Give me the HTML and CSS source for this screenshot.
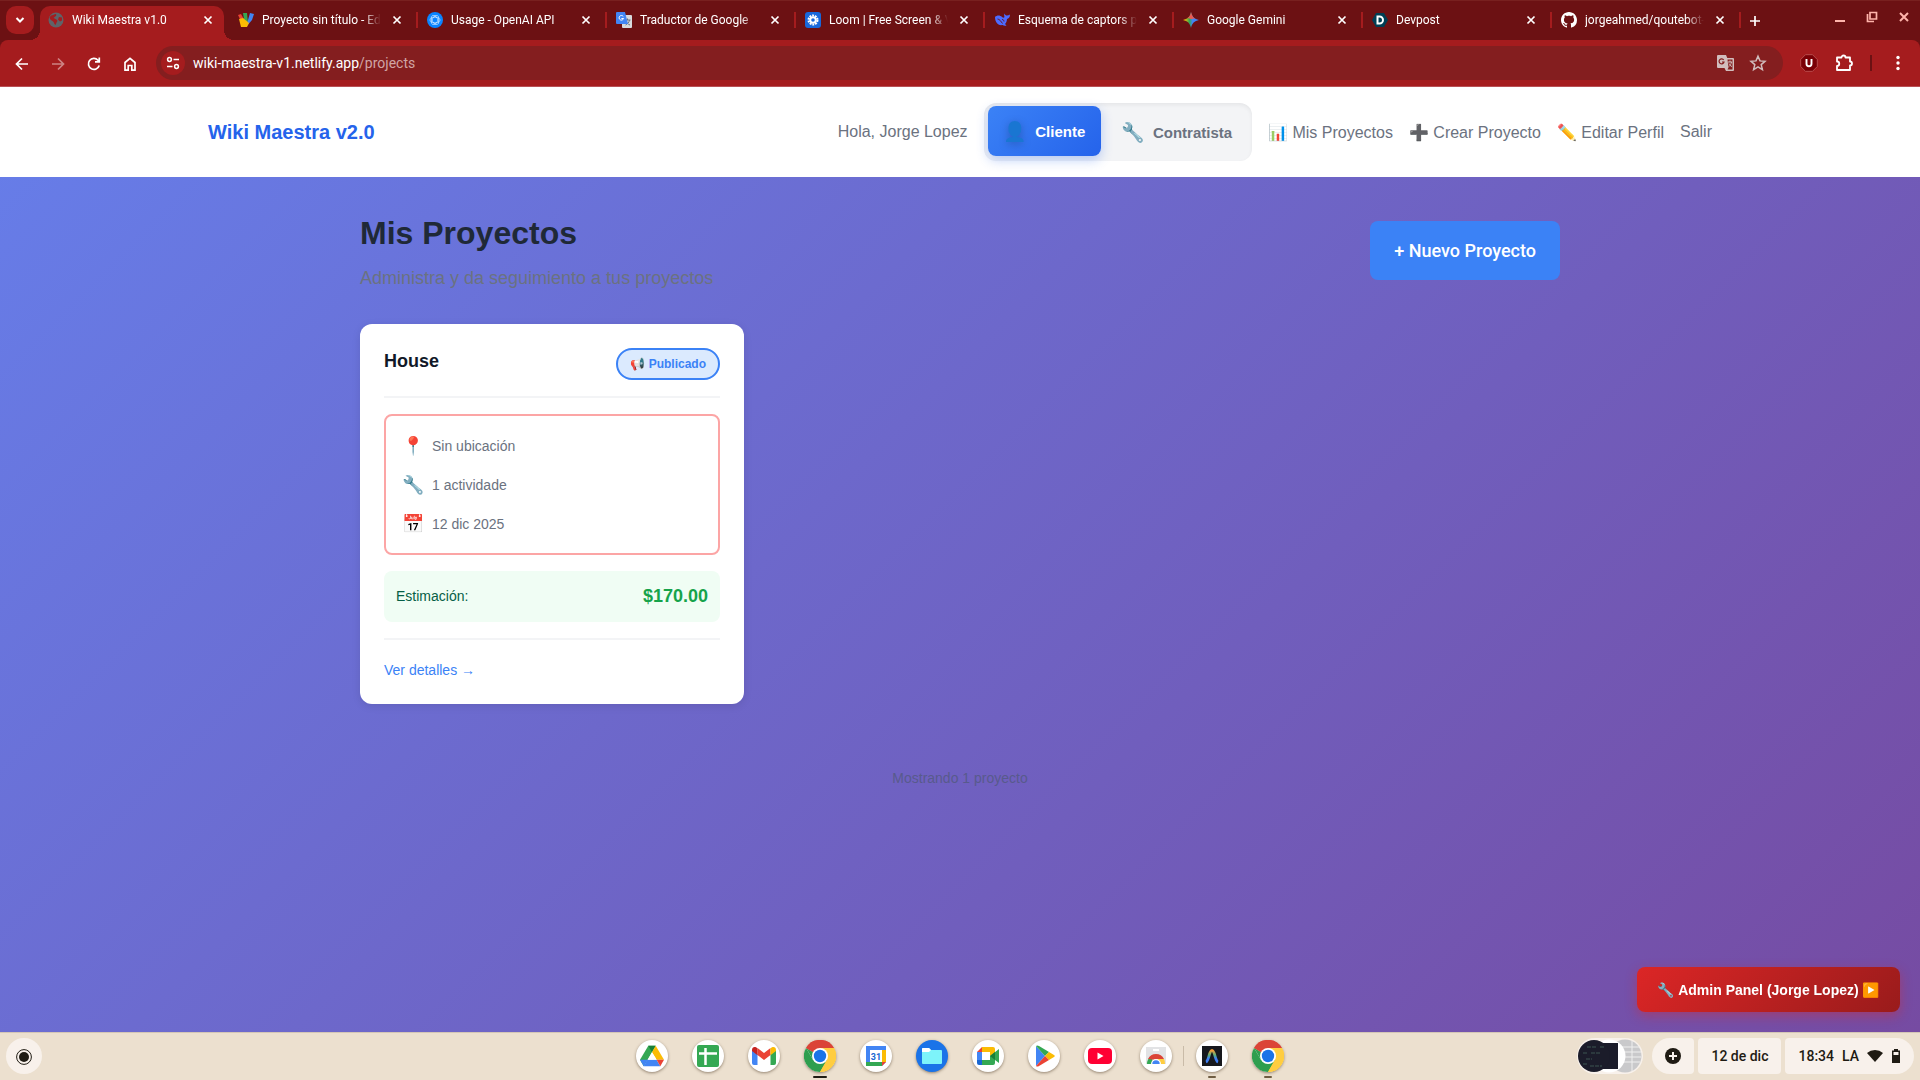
FILE: index.html
```html
<!DOCTYPE html>
<html lang="es">
<head>
    <meta charset="UTF-8">
    <meta name="viewport" content="width=device-width, initial-scale=1.0">
    <title>Wiki Maestra v1.0</title>
    <link rel="stylesheet" href="styles.css">
</head>
<body>
    <!-- Iconos compartidos -->
    <svg class="defs" aria-hidden="true">
        <symbol id="x" viewBox="0 0 10 10"><path d="M1.5 1.5l7 7M8.5 1.5l-7 7" fill="none" stroke="currentColor" stroke-width="1.7"/></symbol>
        <symbol id="chrome" viewBox="0 0 32 32">
            <path d="M16 16L2.1 8A16 16 0 0 1 29.9 8z" fill="#db4437"/>
            <path d="M16 16L29.9 8A16 16 0 0 1 16 32z" fill="#ffcd40"/>
            <path d="M2.1 8A16 16 0 0 0 16 32l6.9-12L16 16 9.1 20z" fill="#2e9e4f"/>
            <path d="M2.1 8L9.1 20 16 16z" fill="#2e9e4f"/>
            <path d="M16 8h13.9A16 16 0 0 1 16 32l6.9-12z" fill="#ffcd40"/>
            <path d="M2.1 8A16 16 0 0 1 29.9 8H16a8 8 0 0 0-6.9 4z" fill="#db4437"/>
            <circle cx="16" cy="16" r="8" fill="#fff"/><circle cx="16" cy="16" r="6.2" fill="#1a73e8"/>
        </symbol>
    </svg>

    <header class="browser">
        <div class="tabstrip">
            <button class="tab-search" aria-label="Buscar pestañas"><svg viewBox="0 0 12 12" width="12" height="12"><path d="M2.5 4L6 7.500 9.500 4" fill="none" stroke="#fff" stroke-width="2"/></svg></button>
            <div class="tabs">
                <div class="tab active">
                    <svg class="favicon" viewBox="0 0 16 16"><circle cx="8" cy="8" r="7.500" fill="#5f6368"/><path d="M3 3.500c2 0 3-1.500 5-1.500 1 2-1 2.500-2.500 4C7 7 9 7 9.500 9c-1 1-1 2-2 4-2-1-1-3-3-4S2 7 1.500 5.500zM11 5l3 .5v3l-2 1-2-2z" fill="#a51c1e"/></svg>
                    <span class="tab-title">Wiki Maestra v1.0</span>
                    <button class="tab-close" aria-label="Cerrar"><svg><use href="#x"/></svg></button>
                </div>
                <div class="tab">
                    <svg class="favicon" viewBox="0 0 16 16"><path d="M0 3l3-1 5 9-2 4z" fill="#ea4335"/><path d="M5 1l4 0 1 10-3 2z" fill="#34a853"/><path d="M12 1l4 1-2 6-6 7z" fill="#4285f4"/><path d="M1 7l4-1 6 5-2 4H3z" fill="#fbbc04"/></svg>
                    <span class="tab-title">Proyecto sin título - Editor</span>
                    <button class="tab-close" aria-label="Cerrar"><svg><use href="#x"/></svg></button>
                </div>
                <div class="tab">
                    <svg class="favicon" viewBox="0 0 16 16"><circle cx="8" cy="8" r="8" fill="#0a84ff"/><g fill="none" stroke="#cfe6ff" stroke-width=".7"><ellipse cx="8" cy="8" rx="5" ry="2.800"/><ellipse cx="8" cy="8" rx="5" ry="2.800" transform="rotate(60 8 8)"/><ellipse cx="8" cy="8" rx="5" ry="2.800" transform="rotate(120 8 8)"/></g></svg>
                    <span class="tab-title">Usage - OpenAI API</span>
                    <button class="tab-close" aria-label="Cerrar"><svg><use href="#x"/></svg></button>
                </div>
                <div class="tab">
                    <svg class="favicon" viewBox="0 0 16 16"><rect x="6" y="3" width="10" height="13" rx="1" fill="#d8dadd"/><path d="M8.500 8h6M11.500 6.500V8M13.500 8c-.5 2.500-2 4-4 5M10 9.500c.8 1.500 2 2.700 4 3.500" stroke="#6b7480" fill="none"/><path d="M1 0h8l3 12H1a1 1 0 0 1-1-1V1a1 1 0 0 1 1-1z" fill="#4285f4"/><path d="M7.300 4.500A2.300 2.300 0 1 0 7.600 6.500H5.400" stroke="#fff" fill="none"/></svg>
                    <span class="tab-title">Traductor de Google</span>
                    <button class="tab-close" aria-label="Cerrar"><svg><use href="#x"/></svg></button>
                </div>
                <div class="tab">
                    <svg class="favicon" viewBox="0 0 16 16"><rect width="16" height="16" rx="3" fill="#1868db"/><circle cx="8" cy="8" r="4.500" fill="none" stroke="#fff" stroke-width="2" stroke-dasharray="1.900 .93"/><circle cx="8" cy="8" r="2.800" fill="none" stroke="#fff" stroke-width="2"/></svg>
                    <span class="tab-title">Loom | Free Screen &amp; Video Recording</span>
                    <button class="tab-close" aria-label="Cerrar"><svg><use href="#x"/></svg></button>
                </div>
                <div class="tab">
                    <svg class="favicon" viewBox="0 0 16 16"><path d="M1 5c2-2 5-2 7 0 1 1 2 1 2.500 0C10 3.500 10 2.500 10.500 1.500c.5 1.500 1.500 2 2.500 2 1 0 2-.5 3-1 0 3-1.500 4-3 4.500-.3 3-1 4-2 5l1.500 1.500c-2 .5-3 0-4-.5C4 14 1 10 1 5z" fill="#4d6bfe"/><path d="M3.500 7c2 0 3.500 2.500 5 4.500M8 7.500c1.500 0 2 1 2 2" fill="none" stroke="#6c1113" stroke-width=".9"/></svg>
                    <span class="tab-title">Esquema de captors para proyecto</span>
                    <button class="tab-close" aria-label="Cerrar"><svg><use href="#x"/></svg></button>
                </div>
                <div class="tab">
                    <svg class="favicon" viewBox="0 0 16 16"><defs><linearGradient id="gem"><stop offset=".1" stop-color="#fbbc04"/><stop offset=".4" stop-color="#34a853"/><stop offset=".6" stop-color="#4285f4"/></linearGradient></defs><path d="M8 0c.8 4.500 3.500 7.200 8 8-4.500.8-7.200 3.500-8 8-.8-4.500-3.500-7.200-8-8 4.500-.8 7.200-3.500 8-8z" fill="url(#gem)"/><path d="M8 0c.8 4 2.500 5.500 4 6.500L8 7 4.500 6C6.500 5 7.500 3 8 0z" fill="#ea5a50"/></svg>
                    <span class="tab-title">Google Gemini</span>
                    <button class="tab-close" aria-label="Cerrar"><svg><use href="#x"/></svg></button>
                </div>
                <div class="tab">
                    <svg class="favicon" viewBox="0 0 16 16"><path d="M4 1h8l4 7-4 7H4L0 8z" fill="#003e54"/><path d="M5.500 4.500h2a3.500 3.500 0 0 1 0 7h-2z" fill="none" stroke="#fff" stroke-width="2"/></svg>
                    <span class="tab-title">Devpost</span>
                    <button class="tab-close" aria-label="Cerrar"><svg><use href="#x"/></svg></button>
                </div>
                <div class="tab">
                    <svg class="favicon" viewBox="0 0 16 16"><path fill="#fff" d="M8 0C3.580 0 0 3.580 0 8c0 3.540 2.290 6.530 5.470 7.590.4.070.55-.17.55-.38 0-.19-.01-.82-.01-1.490-2.010.37-2.530-.49-2.690-.94-.09-.23-.48-.94-.82-1.130-.28-.15-.68-.52-.01-.53.63-.01 1.080.58 1.230.82.72 1.210 1.870.87 2.330.66.07-.52.28-.87.51-1.070-1.780-.2-3.640-.89-3.640-3.950 0-.87.31-1.590.82-2.150-.08-.2-.36-1.020.08-2.120 0 0 .67-.21 2.200.82.64-.18 1.320-.27 2-.27s1.360.09 2 .27c1.530-1.040 2.200-.82 2.200-.82.44 1.100.16 1.920.08 2.120.51.56.82 1.270.82 2.150 0 3.070-1.870 3.750-3.650 3.950.29.25.54.73.54 1.480 0 1.070-.01 1.930-.01 2.200 0 .21.15.46.55.38A8.010 8.010 0 0 0 16 8c0-4.420-3.580-8-8-8z"/></svg>
                    <span class="tab-title">jorgeahmed/qoutebot-app</span>
                    <button class="tab-close" aria-label="Cerrar"><svg><use href="#x"/></svg></button>
                </div>
                <button class="new-tab" aria-label="Nueva pestaña"><svg viewBox="0 0 10 10" width="10" height="10"><path d="M5 0v10M0 5h10" stroke="#fff" stroke-width="1.700"/></svg></button>
            </div>
            <div class="window-buttons">
                <button aria-label="Minimizar"><svg viewBox="0 0 12 12" width="12" height="12"><path d="M1 10h10" stroke="currentColor" stroke-width="2"/></svg></button>
                <button aria-label="Restaurar"><svg viewBox="0 0 12 12" width="12" height="12"><path d="M4 1.500h6.500V8H4zM1.500 3v7.500H8" fill="none" stroke="currentColor" stroke-width="1.700"/></svg></button>
                <button aria-label="Cerrar ventana"><svg viewBox="0 0 12 12" width="12" height="12"><path d="M2 2l8 8M10 2l-8 8" stroke="currentColor" stroke-width="2"/></svg></button>
            </div>
        </div>
        <div class="toolbar">
            <button class="tool" aria-label="Atrás"><svg viewBox="0 0 16 16"><path d="M14 8H3M8 2.500L2.500 8 8 13.500" fill="none" stroke="#fff" stroke-width="1.700"/></svg></button>
            <button class="tool dim" aria-label="Adelante"><svg viewBox="0 0 16 16"><path d="M2 8h11M8 2.500L13.500 8 8 13.500" fill="none" stroke="#fff" stroke-width="1.700"/></svg></button>
            <button class="tool" aria-label="Recargar"><svg viewBox="0 0 16 16"><path d="M13.200 9.500A5.500 5.500 0 1 1 12 4.200l1 1.300M13.300 1.500v4.300H9" fill="none" stroke="#fff" stroke-width="1.700"/></svg></button>
            <button class="tool" aria-label="Inicio"><svg viewBox="0 0 16 16"><path d="M3 14.200V6.500L8 2.300l5 4.200v7.700H9.800V9.500H6.200v4.700z" fill="none" stroke="#fff" stroke-width="1.700"/></svg></button>
            <div class="omnibox">
                <span class="site-info"><svg viewBox="0 0 14 14" width="14" height="14"><g fill="none" stroke="#fff" stroke-width="1.500"><circle cx="3.500" cy="3.500" r="1.900"/><path d="M7.500 3.500H13M1 10.500h5.500"/><circle cx="10.500" cy="10.500" r="1.900"/></g></svg></span>
                <a class="url" href="#">wiki-maestra-v1.netlify.app<span>/projects</span></a>
                <svg class="omni-icon" viewBox="0 0 18 18"><path d="M1 1h8l1.300 3H16a1 1 0 0 1 1 1v11a1 1 0 0 1-1 1H9l-1.500-3H1a1 1 0 0 1-1-1V2a1 1 0 0 1 1-1z" fill="#d1bdbd"/><path d="M10.500 5.500H15.500v10h-5l1-2z" fill="#841e1f"/><path d="M6.700 6A2.500 2.500 0 1 0 7 8H5" fill="none" stroke="#841e1f" stroke-width="1.200"/><path d="M11 8h4M13 6.500V8M14.500 8c-.4 2-1.300 3.500-2.500 4.500M12 9.500c.5 1.500 1.500 2.500 3 3" fill="none" stroke="#d1bdbd"/></svg>
                <svg class="omni-icon" viewBox="0 0 18 18"><path d="M9 2.200l2 4.700 5 .4-3.800 3.300 1.200 5L9 12.900l-4.400 2.700 1.200-5L2 7.300l5-.4z" fill="none" stroke="#d1bdbd" stroke-width="1.500"/></svg>
            </div>
            <div class="extensions">
                <svg viewBox="0 0 18 18" width="18" height="18"><path d="M5.500.7h7l4.800 4.800v7l-4.800 4.800h-7L.7 12.500v-7z" fill="#7a0006" stroke="#c05a5a" stroke-width=".8"/><path d="M6.500 5v4.800a2.500 2.500 0 0 0 5 0V5" fill="none" stroke="#fff" stroke-width="1.900"/></svg>
                <svg viewBox="0 0 18 18" width="18" height="18"><path d="M2 3.500h4.500a2 2 0 0 1 4 0H15v4a2 2 0 0 1 0 4v4.500H2v-4a2 2 0 0 0 0-4.500z" fill="none" stroke="#fff" stroke-width="1.800" stroke-linejoin="round"/></svg>
                <i></i>
                <svg viewBox="0 0 18 18" width="18" height="18"><g fill="#fff"><circle cx="9" cy="3.500" r="1.700"/><circle cx="9" cy="9" r="1.700"/><circle cx="9" cy="14.500" r="1.700"/></g></svg>
            </div>
        </div>
    </header>

    <div class="app">
        <nav class="navbar">
            <div class="nav-container">
                <a class="logo" href="#">Wiki Maestra v2.0</a>
                <div class="nav-menu">
                    <span>Hola, Jorge Lopez</span>
                    <div class="role-toggle">
                        <button class="role active"><span class="role-icon">👤</span>Cliente</button>
                        <button class="role"><span class="role-icon">🔧</span>Contratista</button>
                    </div>
                    <a href="#">📊 Mis Proyectos</a>
                    <a href="#">➕ Crear Proyecto</a>
                    <a href="#">✏️ Editar Perfil</a>
                    <a href="#">Salir</a>
                </div>
            </div>
        </nav>

        <main class="projects">
            <div class="page-header">
                <div>
                    <h1>Mis Proyectos</h1>
                    <p>Administra y da seguimiento a tus proyectos</p>
                </div>
                <button class="new-project">+ Nuevo Proyecto</button>
            </div>

            <div class="project-grid">
                <article class="card">
                    <div class="card-header">
                        <h3>House</h3>
                        <span class="badge">📢 Publicado</span>
                    </div>
                    <div class="card-info">
                        <div class="info-row"><span class="info-icon">📍</span>Sin ubicación</div>
                        <div class="info-row"><span class="info-icon">🔧</span>1 actividade</div>
                        <div class="info-row"><span class="info-icon">📅</span>12 dic 2025</div>
                    </div>
                    <div class="estimate">
                        <span>Estimación:</span>
                        <strong>$170.00</strong>
                    </div>
                    <div class="card-footer">
                        <a href="#">Ver detalles →</a>
                    </div>
                </article>
            </div>

            <p class="summary">Mostrando 1 proyecto</p>
        </main>

        <button class="admin-panel">🔧 Admin Panel (Jorge Lopez) ▶️</button>
    </div>

    <footer class="shelf">
        <div class="shelf-side">
            <button class="launcher" aria-label="Menú de aplicaciones"><svg viewBox="0 0 16 16" width="16" height="16"><circle cx="8" cy="8" r="7.400" fill="none" stroke="#1f1b13"/><circle cx="8" cy="8" r="5" fill="#1f1b13"/></svg></button>
        </div>
        <div class="apps">
            <button class="app-icon" aria-label="Drive"><svg viewBox="0 0 26 24"><path d="M9 1h8l-4 7-9 15-4-7z" fill="#34a853"/><path d="M9 1h8l-4 7z" fill="#188038"/><path d="M17 1l9 15h-8L13 8z" fill="#fbbc04"/><path d="M8 16h10l4 7H4z" fill="#4285f4"/><path d="M0 16h8.500L4 23z" fill="#4285f4"/><path d="M18 16h8l-4 7z" fill="#ea4335"/><path d="M13 8l5 8H8.500z" fill="#fff"/></svg></button>
            <button class="app-icon" aria-label="Hojas de cálculo"><svg viewBox="0 0 24 24"><rect x="1" y="1" width="22" height="22" rx="2" fill="#34a853"/><path d="M9.500 4v17M3 9.500h18" stroke="#fff" stroke-width="2.500"/></svg></button>
            <button class="app-icon" aria-label="Gmail"><svg viewBox="0 0 24 24"><path d="M0 6v13a2 2 0 0 0 2 2h3.500V10z" fill="#4285f4"/><path d="M24 6v13a2 2 0 0 1-2 2h-3.500V10z" fill="#34a853"/><path d="M5.500 4L12 9l6.500-5v7L12 16l-6.500-5z" fill="#ea4335"/><path d="M5.500 4.500v6.800L0 7V6c0-3 3-4 5.500-1.500z" fill="#c5221f"/><path d="M18.500 4.500v6.800L24 7V6c0-3-3-4-5.500-1.500z" fill="#fbbc04"/></svg></button>
            <button class="app-icon full running" aria-label="Chrome"><svg><use href="#chrome"/></svg></button>
            <button class="app-icon" aria-label="Calendario"><svg viewBox="0 0 24 24"><path d="M2 2h20v16l-4 4H2z" fill="#4285f4"/><path d="M18 6h4v12h-4z" fill="#fbbc04"/><path d="M2 18h16v4H2z" fill="#34a853"/><path d="M18 18h4l-4 4z" fill="#ea4335"/><path d="M6 6h12v12H6z" fill="#fff"/><text x="12" y="15.500" text-anchor="middle" class="cal-day">31</text></svg></button>
            <button class="app-icon files" aria-label="Archivos"><svg viewBox="0 0 24 24"><path d="M3 4h6l2 2h10a1 1 0 0 1 1 1v12a1 1 0 0 1-1 1H3a1 1 0 0 1-1-1V5a1 1 0 0 1 1-1z" fill="#7df3fa"/><path d="M3 4h6l2 2-2 2H2V5a1 1 0 0 1 1-1z" fill="#fff"/></svg></button>
            <button class="app-icon" aria-label="Meet"><svg viewBox="0 0 24 24"><path d="M1 8l5-5v5z" fill="#ea4335"/><path d="M6 3h11a2 2 0 0 1 2 2v5l-5 2V8H6z" fill="#fbbc04"/><path d="M1 8h5v8H1z" fill="#4285f4"/><path d="M1 16h5v5H3a2 2 0 0 1-2-2z" fill="#1967d2"/><path d="M6 16h8v-4l9-7v14l-4-3v3a2 2 0 0 1-2 2H6z" fill="#34a853"/><path d="M14 12l5-4v8z" fill="#188038"/></svg></button>
            <button class="app-icon" aria-label="Play Store"><svg viewBox="0 0 24 24"><path d="M4 2v20l9-10z" fill="#4285f4"/><path d="M4 2c1-1 2-.5 3 0l10 6-4 4z" fill="#34a853"/><path d="M17 8l5 3c1 .6 1 1.400 0 2l-5 3-4-4z" fill="#fbbc04"/><path d="M4 22c1 1 2 .5 3 0l10-6-4-4z" fill="#ea4335"/></svg></button>
            <button class="app-icon" aria-label="YouTube"><svg viewBox="0 0 24 24"><rect y="4" width="24" height="16" rx="4" fill="#ff0033"/><path d="M9.500 8.500v7l6-3.500z" fill="#fff"/></svg></button>
            <button class="app-icon" aria-label="Chrome Web Store"><svg viewBox="0 0 24 24"><path d="M2 3h20v17H2z" fill="#e2e3e5"/><path d="M9 5h6v2H9z" fill="#fff"/><path d="M3 20a9 9 0 0 1 4-7.500L10 20z" fill="#34a853"/><path d="M4 15a9 9 0 0 1 16 0l-8 1z" fill="#db4437"/><path d="M12 15h8a9 9 0 0 1 1 5h-6z" fill="#ffcd40"/><path d="M7 20a5 5 0 0 1 10 0z" fill="#fff"/><path d="M8.300 20a3.700 3.700 0 0 1 7.400 0z" fill="#4285f4"/></svg></button>
            <i class="shelf-divider"></i>
            <button class="app-icon running soft" aria-label="Antigravity"><svg viewBox="0 0 24 24"><defs><linearGradient id="arc" x2="0" y2="1"><stop offset="0" stop-color="#f29a38"/><stop offset=".4" stop-color="#5bb07a"/><stop offset=".7" stop-color="#3d7ff5"/></linearGradient></defs><rect x="2" y="2" width="20" height="20" fill="#16181d"/><path d="M6 18C9 17 9 6.500 12 6.500S15 17 18 18" fill="none" stroke="url(#arc)" stroke-width="2.800"/></svg></button>
            <button class="app-icon full running soft" aria-label="Chrome"><svg><use href="#chrome"/></svg></button>
        </div>
        <div class="shelf-side status">
            <svg class="holding" viewBox="0 0 66 36" width="66" height="36"><rect width="66" height="36" rx="18" fill="#f8f1eb"/><circle cx="48" cy="18" r="16.500" fill="#c9c9cb"/><path d="M39 9h24M36 14h28M40 19h24M38 24h25M55 3v30" stroke="#efefef"/><circle cx="32" cy="18" r="16.500" fill="#fff"/><path d="M16 5h25v26H16z" fill="#1b1c2a"/><circle cx="17" cy="18" r="16" fill="#1b1c2a"/><path d="M10 9h10M23 9h5M6 15h5M14 15h9M9 21h6M6 26h4M13 28h12" stroke="#3c5550" stroke-dasharray="4 1"/></svg>
            <button class="pill first" aria-label="Captura"><svg viewBox="0 0 18 18" width="18" height="18"><circle cx="9" cy="9" r="8" fill="#1f1b13"/><path d="M9 5v8M5 9h8" stroke="#f8f1eb" stroke-width="2"/></svg></button>
            <button class="pill">12 de dic</button>
            <button class="pill last"><span>18:34</span><span>LA</span>
                <svg viewBox="0 0 16 16" width="16" height="16"><path d="M0 5a12 12 0 0 1 16 0L8 14z" fill="#1f1b13"/></svg>
                <svg viewBox="0 0 10 16" width="10" height="16"><path d="M3 1h4v1.500h2V15H1V2.500h2z" fill="#1f1b13"/><path d="M2.500 4h5v3h-5z" fill="#f8f1eb"/></svg>
            </button>
        </div>
    </footer>
</body>
</html>
```
FILE: styles.css
```css
* {
    margin: 0;
    padding: 0;
    box-sizing: border-box;
}
body {
    display: flex;
    flex-direction: column;
    min-height: 100vh;
    font-family: "Liberation Sans", Arial, "Noto Color Emoji", sans-serif;
    color: #111827;
}
button {
    border: none;
    background: none;
    font: inherit;
    color: inherit;
    cursor: pointer;
}
a {
    color: inherit;
    text-decoration: none;
}
.defs {
    position: absolute;
    width: 0;
    height: 0;
}

/* Navegador */
.browser {
    font-family: Roboto, sans-serif;
    color: #fff;
    background: #6c1113;
    border-bottom: 1px solid #b95055;
}
.tabstrip {
    display: flex;
    height: 40px;
    padding: 5px 0 0 6px;
    border-top: 1px solid #78201f;
}
.tab-search {
    width: 28px;
    height: 28px;
    border-radius: 10px;
    background: #a51c1e;
    display: flex;
    align-items: center;
    justify-content: center;
}
.tabs {
    display: flex;
    flex: 1;
    min-width: 0;
    padding-left: 6px;
}
.tab {
    display: flex;
    align-items: center;
    width: 189px;
    height: 28px;
    padding: 0 13px 0 9px;
    position: relative;
    font-size: 12px;
}
.tab::after {
    content: "";
    position: absolute;
    right: 0;
    top: 6px;
    width: 2px;
    height: 16px;
    background: #a51c1e;
}
.tab.active {
    width: 184px;
    height: 34px;
    margin-right: 5px;
    padding: 0 8px 6px;
    background: #a51c1e;
    border-radius: 10px 10px 0 0;
}
.tab.active::before,
.tab.active::after {
    content: "";
    position: absolute;
    left: -10px;
    right: auto;
    top: auto;
    bottom: 0;
    width: 10px;
    height: 10px;
    background: radial-gradient(circle at 0 0, transparent 10px, #a51c1e 10px);
}
.tab.active::after {
    left: 100%;
    background: radial-gradient(circle at 100% 0, transparent 10px, #a51c1e 10px);
}
.favicon {
    width: 16px;
    height: 16px;
    flex: none;
}
.tab-title {
    flex: 1;
    margin: 0 8px;
    overflow: hidden;
    white-space: nowrap;
    -webkit-mask-image: linear-gradient(to right, #000 85%, transparent);
    mask-image: linear-gradient(to right, #000 85%, transparent);
}
.tab-close {
    width: 16px;
    height: 16px;
    flex: none;
    display: flex;
    align-items: center;
    justify-content: center;
}
.tab-close svg {
    width: 10px;
    height: 10px;
}
.new-tab {
    width: 28px;
    height: 28px;
}
.window-buttons {
    display: flex;
    height: 22px;
    color: #ffb4ab;
}
.window-buttons button {
    width: 32px;
}
.toolbar {
    display: flex;
    align-items: center;
    height: 46px;
    padding: 6px 4px;
    background: #a51c1e;
    border-radius: 8px 8px 0 0;
}
.tool {
    width: 36px;
    height: 32px;
}
.tool svg {
    width: 16px;
    height: 16px;
    vertical-align: middle;
}
.tool.dim {
    opacity: .45;
}
.omnibox {
    flex: 1;
    display: flex;
    align-items: center;
    gap: 14px;
    height: 34px;
    margin-left: 8px;
    padding: 0 16px 0 5px;
    background: #841e1f;
    border-radius: 17px;
}
.site-info {
    width: 24px;
    height: 24px;
    border-radius: 50%;
    background: #a51c1e;
    display: flex;
    align-items: center;
    justify-content: center;
}
.url {
    flex: 1;
    margin-left: -6px;
    font-size: 14px;
}
.url span {
    color: #d1a5a5;
}
.omni-icon {
    width: 18px;
    height: 18px;
}
.extensions {
    display: flex;
    align-items: center;
    gap: 17px;
    padding: 0 9px 0 17px;
}
.extensions i {
    width: 2px;
    height: 16px;
    background: #6c1113;
}

/* Aplicación */
.app {
    flex: 1;
    background: linear-gradient(135deg, #667eea 0%, #764ba2 100%);
}
.navbar {
    background: #fff;
    padding: 16px 0;
}
.nav-container {
    display: flex;
    justify-content: space-between;
    align-items: center;
    max-width: 1536px;
    margin: 0 auto;
    padding: 0 16px;
}
.logo {
    font-size: 20px;
    font-weight: bold;
    color: #2563eb;
}
.nav-menu {
    display: flex;
    align-items: center;
    gap: 16px;
    font-size: 16px;
    color: #6b7280;
}
.role-toggle {
    display: flex;
    gap: 4px;
    padding: 4px;
    background: #f3f4f6;
    border-radius: 12px;
    box-shadow: inset 0 2px 4px rgba(0,0,0,0.06);
}
.role {
    display: flex;
    align-items: center;
    gap: 8px;
    height: 50px;
    padding: 0 16px;
    border-radius: 8px;
    font-size: 15px;
    font-weight: bold;
}
.role.active {
    color: #fff;
    background: linear-gradient(135deg, #3b82f6 0%, #2563eb 100%);
    box-shadow: 0 4px 12px rgba(37,99,235,0.3);
    transform: translateY(-1px);
}
.role-icon {
    font-size: 19px;
    font-weight: normal;
}
.role.active .role-icon {
    filter: drop-shadow(0 2px 4px rgba(0,0,0,0.2));
}
.projects {
    max-width: 1248px;
    margin: 0 auto;
    padding: 32px 24px;
}
.page-header {
    display: flex;
    justify-content: space-between;
    align-items: center;
    margin-bottom: 32px;
}
h1 {
    font-size: 32px;
    line-height: 48px;
    margin-bottom: 8px;
    color: #1f2937;
}
.page-header p {
    font-size: 18px;
    line-height: 27px;
    color: #6b7280;
}
.new-project {
    height: 59px;
    padding: 0 24px;
    border-radius: 8px;
    background: #3b82f6;
    color: #fff;
    font-family: Roboto, sans-serif;
    font-size: 18px;
    font-weight: 500;
}
.project-grid {
    display: grid;
    grid-template-columns: repeat(auto-fill, minmax(350px, 1fr));
    gap: 24px;
}
.card {
    background: #fff;
    border-radius: 12px;
    padding: 24px;
    box-shadow: 0 2px 8px rgba(0,0,0,0.1);
}
.card-header {
    display: flex;
    justify-content: space-between;
    align-items: flex-start;
    padding-bottom: 16px;
    margin-bottom: 16px;
    border-bottom: 2px solid #f3f4f6;
}
.card-header h3 {
    font-size: 18px;
    line-height: 26px;
}
.badge {
    padding: 5px 12px;
    border: 2px solid #3b82f6;
    border-radius: 16px;
    background: #dbeafe;
    color: #3b82f6;
    font-size: 12px;
    line-height: 18px;
    font-weight: bold;
}
.card-info {
    display: flex;
    flex-direction: column;
    gap: 12px;
    padding: 16px;
    margin-bottom: 16px;
    border: 2px solid #fca5a5;
    border-radius: 8px;
}
.info-row {
    display: flex;
    align-items: center;
    gap: 8px;
    height: 27px;
    font-size: 14px;
    color: #6b7280;
}
.info-icon {
    width: 22px;
    text-align: center;
    font-size: 18px;
}
.estimate {
    display: flex;
    justify-content: space-between;
    align-items: center;
    padding: 12px;
    margin-bottom: 16px;
    border-radius: 8px;
    background: #f0fdf4;
    font-size: 14px;
    line-height: 27px;
    color: #065f46;
}
.estimate strong {
    font-size: 18px;
    color: #16a34a;
}
.card-footer {
    padding-top: 20px;
    border-top: 2px solid #f3f4f6;
    font-size: 14px;
    line-height: 20px;
    color: #3b82f6;
}
.summary {
    margin-top: 64px;
    text-align: center;
    font-size: 14px;
    line-height: 20px;
    color: #585a8c;
}
.admin-panel {
    position: fixed;
    right: 20px;
    bottom: 68px;
    height: 45px;
    padding: 0 20px;
    border-radius: 8px;
    background: linear-gradient(135deg, #dc2626 0%, #991b1b 100%);
    box-shadow: 0 4px 12px rgba(220,38,38,0.4);
    color: #fff;
    font-size: 14px;
    font-weight: bold;
}

/* Barra inferior */
.shelf {
    display: flex;
    align-items: center;
    justify-content: space-between;
    height: 48px;
    padding: 0 6px;
    background: #ece0cf;
    box-shadow: inset 0 1px 0 #d4c6b6;
    color: #1f1b13;
    font-family: Roboto, sans-serif;
}
.shelf-side {
    flex: 1;
    display: flex;
    align-items: center;
}
.launcher {
    width: 36px;
    height: 36px;
    border-radius: 50%;
    background: #f8f1eb;
}
.launcher svg {
    vertical-align: middle;
}
.apps {
    display: flex;
    align-items: center;
    gap: 24px;
}
.app-icon {
    display: flex;
    align-items: center;
    justify-content: center;
    width: 32px;
    height: 32px;
    border-radius: 50%;
    background: #fff;
    box-shadow: 0 1px 3px rgba(60,40,20,0.5);
    position: relative;
}
.app-icon svg {
    width: 24px;
    height: 24px;
}
.app-icon.full svg {
    width: 32px;
    height: 32px;
}
.app-icon.files {
    background: #1a73e8;
}
.app-icon.running::after {
    content: "";
    position: absolute;
    left: 9px;
    bottom: -6px;
    width: 14px;
    height: 2px;
    border-radius: 1px;
    background: #1f1b13;
}
.app-icon.running.soft::after {
    left: 12px;
    width: 8px;
    background: #6f5d43;
}
.cal-day {
    font-size: 9px;
    font-weight: bold;
    fill: #1967d2;
}
.shelf-divider {
    width: 1px;
    height: 20px;
    margin: 0 -12px 0 -13px;
    background: #c9bba8;
}
.status {
    justify-content: flex-end;
    gap: 4px;
}
.holding {
    margin-right: 5px;
}
.pill {
    display: flex;
    align-items: center;
    gap: 7px;
    height: 36px;
    padding: 0 13px;
    border-radius: 4px;
    background: #f8f1eb;
    font-size: 14px;
    font-weight: 500;
}
.pill.first {
    padding: 0 12px;
    border-radius: 18px 4px 4px 18px;
}
.pill.last {
    gap: 8px;
    border-radius: 4px 18px 18px 4px;
}
```
